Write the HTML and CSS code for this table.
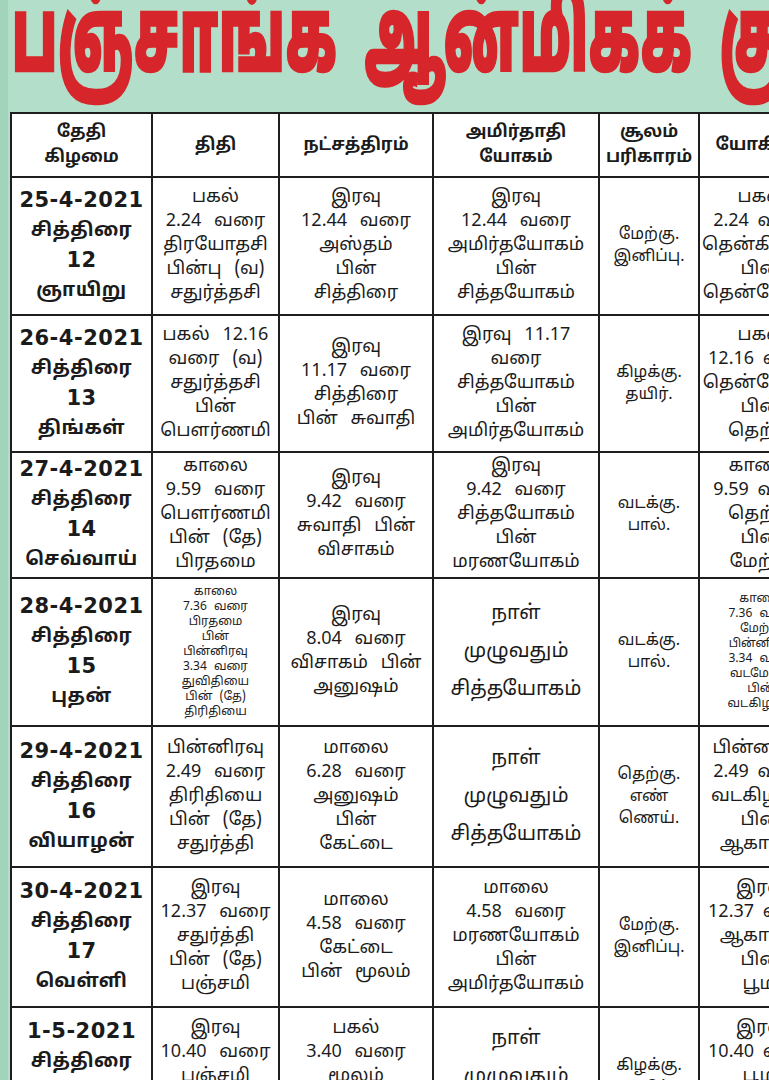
FILE: index.html
```html
<!DOCTYPE html>
<html lang="ta">
<head>
<meta charset="utf-8">
<title>பஞ்சாங்க ஆன்மிகக் குறிப்புகள்</title>
<link rel="stylesheet" href="styles.css">
</head>
<body>
<div class="page">
  <h1 class="title"><span class="title-text">பஞ்சாங்க ஆன்மிகக் குறிப்புகள்</span></h1>
  <div class="sheet">
    <table class="panchang">
      <colgroup>
        <col class="c-date"><col class="c-thithi"><col class="c-star"><col class="c-yogam"><col class="c-soolam"><col class="c-yogini">
      </colgroup>
      <thead>
        <tr class="r-head">
          <th>தேதி<br>கிழமை</th>
          <th>திதி</th>
          <th>நட்சத்திரம்</th>
          <th>அமிர்தாதி<br>யோகம்</th>
          <th>சூலம்<br>பரிகாரம்</th>
          <th>யோகினி</th>
        </tr>
      </thead>
      <tbody>
        <tr class="r1">
          <td class="date">25-4-2021<br><span class="tm">சித்திரை</span><br>12<br><span class="tm">ஞாயிறு</span></td>
          <td>பகல்<br>2.24 வரை<br>திரயோதசி<br>பின்பு (வ)<br>சதுர்த்தசி</td>
          <td>இரவு<br>12.44 வரை<br>அஸ்தம்<br>பின்<br>சித்திரை</td>
          <td>இரவு<br>12.44 வரை<br>அமிர்தயோகம்<br>பின்<br>சித்தயோகம்</td>
          <td class="sm">மேற்கு.<br>இனிப்பு.</td>
          <td class="yog">பகல்<br>2.24 வரை<br>தென்கிழக்கு<br>பின்<br>தென்மேற்கு</td>
        </tr>
        <tr class="r2">
          <td class="date">26-4-2021<br><span class="tm">சித்திரை</span><br>13<br><span class="tm">திங்கள்</span></td>
          <td>பகல் 12.16<br>வரை (வ)<br>சதுர்த்தசி<br>பின்<br>பௌர்ணமி</td>
          <td>இரவு<br>11.17 வரை<br>சித்திரை<br>பின் சுவாதி</td>
          <td>இரவு 11.17<br>வரை<br>சித்தயோகம்<br>பின்<br>அமிர்தயோகம்</td>
          <td class="sm">கிழக்கு.<br>தயிர்.</td>
          <td class="yog">பகல்<br>12.16 வரை<br>தென்மேற்கு<br>பின்<br>தெற்கு</td>
        </tr>
        <tr class="r3">
          <td class="date">27-4-2021<br><span class="tm">சித்திரை</span><br>14<br><span class="tm">செவ்வாய்</span></td>
          <td>காலை<br>9.59 வரை<br>பௌர்ணமி<br>பின் (தே)<br>பிரதமை</td>
          <td>இரவு<br>9.42 வரை<br>சுவாதி பின்<br>விசாகம்</td>
          <td>இரவு<br>9.42 வரை<br>சித்தயோகம்<br>பின்<br>மரணயோகம்</td>
          <td class="sm">வடக்கு.<br>பால்.</td>
          <td class="yog">காலை<br>9.59 வரை<br>தெற்கு<br>பின்<br>மேற்கு</td>
        </tr>
        <tr class="r4">
          <td class="date">28-4-2021<br><span class="tm">சித்திரை</span><br>15<br><span class="tm">புதன்</span></td>
          <td class="tiny">காலை<br>7.36 வரை<br>பிரதமை<br>பின்<br>பின்னிரவு<br>3.34 வரை<br>துவிதியை<br>பின் (தே)<br>திரிதியை</td>
          <td>இரவு<br>8.04 வரை<br>விசாகம் பின்<br>அனுஷம்</td>
          <td class="wide">நாள்<br>முழுவதும்<br>சித்தயோகம்</td>
          <td class="sm">வடக்கு.<br>பால்.</td>
          <td class="yog tiny">காலை<br>7.36 வரை<br>மேற்கு<br>பின்னிரவு<br>3.34 வரை<br>வடமேற்கு<br>பின்<br>வடகிழக்கு</td>
        </tr>
        <tr class="r5">
          <td class="date">29-4-2021<br><span class="tm">சித்திரை</span><br>16<br><span class="tm">வியாழன்</span></td>
          <td>பின்னிரவு<br>2.49 வரை<br>திரிதியை<br>பின் (தே)<br>சதுர்த்தி</td>
          <td>மாலை<br>6.28 வரை<br>அனுஷம்<br>பின்<br>கேட்டை</td>
          <td class="wide">நாள்<br>முழுவதும்<br>சித்தயோகம்</td>
          <td class="sm">தெற்கு.<br>எண்<br>ணெய்.</td>
          <td class="yog">பின்னிரவு<br>2.49 வரை<br>வடகிழக்கு<br>பின்<br>ஆகாயம்</td>
        </tr>
        <tr class="r6">
          <td class="date">30-4-2021<br><span class="tm">சித்திரை</span><br>17<br><span class="tm">வெள்ளி</span></td>
          <td>இரவு<br>12.37 வரை<br>சதுர்த்தி<br>பின் (தே)<br>பஞ்சமி</td>
          <td>மாலை<br>4.58 வரை<br>கேட்டை<br>பின் மூலம்</td>
          <td>மாலை<br>4.58 வரை<br>மரணயோகம்<br>பின்<br>அமிர்தயோகம்</td>
          <td class="sm">மேற்கு.<br>இனிப்பு.</td>
          <td class="yog">இரவு<br>12.37 வரை<br>ஆகாயம்<br>பின்<br>பூமி</td>
        </tr>
        <tr class="r7">
          <td class="date">1-5-2021<br><span class="tm">சித்திரை</span><br>18<br><span class="tm">சனி</span></td>
          <td>இரவு<br>10.40 வரை<br>பஞ்சமி<br>பின் (தே)<br>சஷ்டி</td>
          <td>பகல்<br>3.40 வரை<br>மூலம்<br>பின்<br>பூராடம்</td>
          <td class="wide">நாள்<br>முழுவதும்<br>சித்தயோகம்</td>
          <td class="sm">கிழக்கு.<br>தயிர்.</td>
          <td class="yog">இரவு<br>10.40 வரை<br>பூமி<br>பின்<br>கிழக்கு</td>
        </tr>
      </tbody>
    </table>
  </div>
</div>
</body>
</html>
```

FILE: styles.css
```css
html, body {
  margin: 0;
  padding: 0;
}
body {
  width: 769px;
  height: 1080px;
  overflow: hidden;
  background: #b3dfca;
  font-family: "Noto Sans Tamil", "Lohit Tamil", "Noto Sans", "DejaVu Sans", sans-serif;
  color: #1b1b1b;
}
.page {
  display: flex;
  flex-direction: column;
  width: 769px;
  height: 1080px;
  overflow: hidden;
  border-left: 8px solid #a2d4bc;
  box-sizing: border-box;
}
.title {
  flex: 0 0 auto;
  margin: 0;
  height: 112px;
  padding-left: 4px;
  font-size: 60px;
  line-height: 60px;
  font-weight: 900;
  color: #d7262b;
  white-space: nowrap;
  overflow: hidden;
}
.title-text {
  display: inline-block;
  transform-origin: 0 0;
  transform: translateY(-6px) scale(0.88, 1.72);
  letter-spacing: 1px;
  word-spacing: 14px;
  -webkit-text-stroke: 1.5px #d7262b;
}
.sheet {
  flex: 0 0 auto;
  padding-left: 2px;
}
.panchang {
  border-collapse: collapse;
  table-layout: fixed;
  width: 812px;
  background: #fff;
}
.c-date { width: 141px; }
.c-thithi { width: 127px; }
.c-star { width: 154px; }
.c-yogam { width: 166px; }
.c-soolam { width: 100px; }
.c-yogini { width: 124px; }
.panchang th,
.panchang td {
  border: 2px solid #1e1e1e;
  text-align: center;
  vertical-align: middle;
  padding: 0 2px;
  overflow: hidden;
}
.panchang th {
  font-size: 17px;
  line-height: 25px;
  font-weight: 700;
}
.r-head { height: 64px; }
.r1 { height: 138px; }
.r2 { height: 137px; }
.r3 { height: 126px; }
.r4 { height: 148px; }
.r5 { height: 141px; }
.r6 { height: 140px; }
.r7 { height: 140px; }
.panchang td {
  font-size: 18px;
  line-height: 24px;
  word-spacing: 8px;
}
.panchang td.date {
  font-family: "DejaVu Sans", sans-serif;
  font-weight: 700;
  font-size: 21px;
  line-height: 29px;
  letter-spacing: 0.5px;
  word-spacing: 0;
}
.panchang td.date .tm {
  font-family: "Noto Sans Tamil", "Lohit Tamil", "Noto Sans", sans-serif;
  font-size: 19px;
}
.panchang td.sm {
  font-size: 16px;
  line-height: 22px;
  word-spacing: 0;
}
.panchang td.tiny {
  font-size: 12px;
  line-height: 15px;
  word-spacing: 4px;
}
.panchang td.wide {
  font-size: 20px;
  line-height: 38px;
}
.panchang td.yog {
  white-space: nowrap;
  word-spacing: 4px;
}
```
